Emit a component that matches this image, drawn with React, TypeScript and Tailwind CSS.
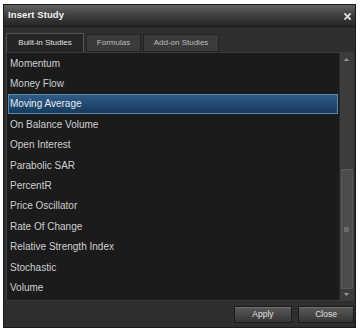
import React from "react";

const items = [
  "Momentum",
  "Money Flow",
  "Moving Average",
  "On Balance Volume",
  "Open Interest",
  "Parabolic SAR",
  "PercentR",
  "Price Oscillator",
  "Rate Of Change",
  "Relative Strength Index",
  "Stochastic",
  "Volume",
];

export default function App() {
  return (
    <div
      className="w-[361px] h-[331px] bg-white overflow-hidden pt-[4px] pl-[3px]"
      style={{ fontFamily: '"Liberation Sans", Arial, sans-serif' }}
    >
      <div className="w-[353px] h-[324px] bg-[#2f2f2f] border border-[#1c1c1c] flex flex-col">
        {/* title bar */}
        <div className="h-[22px] shrink-0 flex items-center justify-between pl-[4px] pr-[4px] bg-gradient-to-b from-[#626262] via-[#3e3e3e] to-[#262626] border-b border-[#1a1a1a]">
          <span className="text-[9.5px] font-bold text-[#f4f4f4] tracking-[0.1px]">Insert Study</span>
          <svg width="7" height="7" viewBox="0 0 7 7" className="mt-[1px]">
            <path d="M1 1 L6 6 M6 1 L1 6" stroke="#dcdcdc" strokeWidth="1.8" strokeLinecap="square" />
          </svg>
        </div>
        {/* tabs */}
        <div className="flex pl-[2px] pt-[6px] gap-[2px] h-[25px] shrink-0">
          <div className="w-[78px] h-[19px] flex items-center justify-center bg-[#252525] border border-[#555] border-b-0 text-[8px] text-[#e0e0e0] rounded-t-[1px]">
            Built-in Studies
          </div>
          <div className="w-[55px] h-[18px] mt-[1px] flex items-center justify-center bg-[#3b3b3b] border border-[#232323] text-[8px] text-[#bdbdbd]">
            Formulas
          </div>
          <div className="w-[76px] h-[18px] mt-[1px] flex items-center justify-center bg-[#3b3b3b] border border-[#232323] text-[8px] text-[#bdbdbd]">
            Add-on Studies
          </div>
        </div>
        {/* list */}
        <div className="ml-[2px] mr-[1px] h-[249px] shrink-0 flex bg-[#1b1b1b] border border-[#3a3a3a]">
          <div className="flex-1 flex flex-col pl-[1px] pr-[1px]">
            {items.map((it) => {
              const sel = it === "Moving Average";
              return (
                <div
                  key={it}
                  className={
                    "h-[20.4px] shrink-0 flex items-center pl-[1px] text-[10px] " +
                    (sel
                      ? "bg-gradient-to-b from-[#2e5c88] to-[#173a5e] border border-[#5d8ab5] text-[#e4eaf0]"
                      : "text-[#cfcfcf] border border-transparent")
                  }
                >
                  {it}
                </div>
              );
            })}
          </div>
          {/* scrollbar */}
          <div className="w-[14px] bg-[#3c3c3c] border-l border-[#2a2a2a] flex flex-col items-center">
            <div className="h-[10px] flex items-center justify-center mt-[1px]">
              <svg width="5" height="3" viewBox="0 0 5 3">
                <path d="M0 3 L2.5 0 L5 3 Z" fill="#9a9a9a" />
              </svg>
            </div>
            <div className="flex-1" />
            <div className="w-[12px] h-[120px] bg-[#4c4c4c] border border-[#5a5a5a] flex items-center justify-center">
              <div className="w-[5px] h-[5px] bg-[#6a6a6a]" />
            </div>
            <div className="h-[10px] flex items-center justify-center mb-[1px]">
              <svg width="5" height="3" viewBox="0 0 5 3">
                <path d="M0 0 L5 0 L2.5 3 Z" fill="#9a9a9a" />
              </svg>
            </div>
          </div>
        </div>
        {/* footer */}
        <div className="flex-1 flex items-center justify-end gap-[6px] pr-[1px]">
          <div className="w-[58px] h-[17px] flex items-center justify-center bg-gradient-to-b from-[#5a5a5a] to-[#353535] border border-[#1a1a1a] text-[8.5px] text-[#e0e0e0] shadow-[inset_0_1px_0_#707070]">
            Apply
          </div>
          <div className="w-[56px] h-[17px] flex items-center justify-center bg-gradient-to-b from-[#5a5a5a] to-[#353535] border border-[#1a1a1a] text-[8.5px] text-[#e0e0e0] shadow-[inset_0_1px_0_#707070]">
            Close
          </div>
        </div>
      </div>
    </div>
  );
}
